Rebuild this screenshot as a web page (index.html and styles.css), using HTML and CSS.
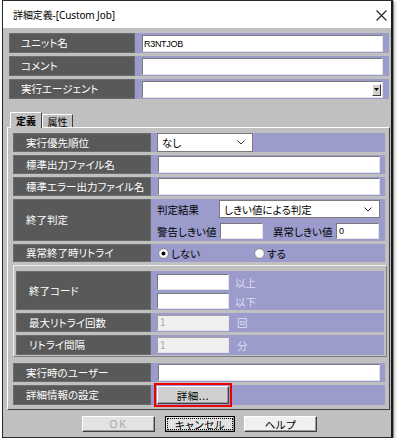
FILE: index.html
```html
<!DOCTYPE html>
<html lang="ja">
<head>
<meta charset="utf-8">
<link rel="stylesheet" href="styles.css">
</head>
<body>
<div class="window">
  <div class="titlebar">
    <span class="title">詳細定義-[Custom Job]</span>
    <svg class="close" width="11" height="11" viewBox="0 0 11 11"><path d="M0.5 0.5 L10.5 10.5 M10.5 0.5 L0.5 10.5" stroke="#222" stroke-width="1.1" fill="none"/></svg>
  </div>
  <div class="body">
    <div class="toprows">
      <div class="trow"><div class="tlabel">ユニット名</div><div class="tval"><div class="tinput mono">R3NTJOB</div></div></div>
      <div class="trow"><div class="tlabel">コメント</div><div class="tval"><div class="tinput"></div></div></div>
      <div class="trow"><div class="tlabel">実行エージェント</div><div class="tval"><div class="tinput combo"><span class="dropbtn"><svg width="5" height="3" viewBox="0 0 5 3"><path d="M0 0 H5 L2.5 3 Z" fill="#000"/></svg></span></div></div></div>
    </div>
    <div class="tabs">
      <div class="tab active">定義</div>
      <div class="tab">属性</div>
    </div>
    <div class="panel">
      <div class="prow"><div class="plabel">実行優先順位</div><div class="pval"><div class="select sel-small">なし<svg class="chev" width="8" height="5" viewBox="0 0 8 5"><path d="M0.5 0.5 L4 4 L7.5 0.5" stroke="#333" fill="none"/></svg></div></div></div>
      <div class="prow"><div class="plabel">標準出力ファイル名</div><div class="pval"><div class="input wide"></div></div></div>
      <div class="prow"><div class="plabel">標準エラー出力ファイル名</div><div class="pval"><div class="input wide"></div></div></div>
      <div class="prow tall"><div class="plabel">終了判定</div>
        <div class="pval col">
          <div class="line"><span class="lbl w62">判定結果</span><div class="select sel-long">しきい値による判定<svg class="chev" width="8" height="5" viewBox="0 0 8 5"><path d="M0.5 0.5 L4 4 L7.5 0.5" stroke="#333" fill="none"/></svg></div></div>
          <div class="line line2"><span class="lbl w63">警告しきい値</span><div class="input small"></div><span class="lbl w63 ml10">異常しきい値</span><div class="input small mono">0</div></div>
        </div>
      </div>
      <div class="prow radio-row"><div class="plabel">異常終了時リトライ</div>
        <div class="pval">
          <span class="opt"><svg width="11" height="11" viewBox="0 0 11 11"><circle cx="5.5" cy="5.5" r="4.8" fill="#fff" stroke="#7a7a7a" stroke-width="0.8"/><circle cx="5.5" cy="5.5" r="2" fill="#000"/></svg>しない</span>
          <span class="opt"><svg width="11" height="11" viewBox="0 0 11 11"><circle cx="5.5" cy="5.5" r="4.8" fill="#fff" stroke="#7a7a7a" stroke-width="0.8"/></svg>する</span>
        </div>
      </div>
      <div class="group">
        <div class="grow code"><div class="glabel">終了コード</div>
          <div class="pval col gcol">
            <div class="gline"><div class="input mid"></div><span class="dis">以上</span></div>
            <div class="gline"><div class="input mid"></div><span class="dis">以下</span></div>
          </div>
        </div>
        <div class="grow"><div class="glabel">最大リトライ回数</div><div class="pval"><div class="input mid disabled">1</div><span class="dis unit">回</span></div></div>
        <div class="grow h20"><div class="glabel">リトライ間隔</div><div class="pval"><div class="input mid disabled">1</div><span class="dis unit">分</span></div></div>
      </div>
      <div class="prow"><div class="plabel">実行時のユーザー</div><div class="pval"><div class="input wide"></div></div></div>
      <div class="prow h20"><div class="plabel">詳細情報の設定</div><div class="pval"><div class="btn detail">詳細...</div></div></div>
    </div>
    <div class="buttons">
      <div class="btn bottom ok">OK</div>
      <div class="btn bottom cancel"><span class="focus">キャンセル</span></div>
      <div class="btn bottom help">ヘルプ</div>
    </div>
  </div>
</div>
</body>
</html>
```

FILE: styles.css
```css
html, body {
  margin: 0;
  padding: 0;
  background: #ffffff;
}
body {
  font-family: "Noto Sans CJK JP", "Noto Sans", sans-serif;
  font-size: 10.5px;
  font-feature-settings: "palt";
  color: #000;
}
.window {
  margin-left: 2px;
  width: 388px;
  height: 436px;
  border: 1px solid #2a2a2a;
  border-right: 2px solid #1a1a1a;
  box-shadow: 1px 1px 0 #8a8a8a, 2px 2px 3px rgba(0,0,0,0.25);
  display: flex;
  flex-direction: column;
  background: #c0c0c0;
}
.titlebar {
  height: 27px;
  flex: none;
  background: #ffffff;
  display: flex;
  align-items: center;
  justify-content: space-between;
  padding: 0 4px 0 10px;
}
.title {
  font-family: "Noto Sans", "Noto Sans CJK JP", sans-serif;
  font-size: 10px;
  letter-spacing: -0.1px;
  line-height: 12px;
  margin-top: 1px;
}
.close { display: block; margin-top: 1px; }

.body {
  flex: 1;
  display: flex;
  flex-direction: column;
  padding: 5px 1px 5px 4px;
  background: #c0c0c0;
}
.toprows {
  display: flex;
  flex-direction: column;
  gap: 3px;
  margin: 0 1px 0 2px;
}
.trow { display: flex; height: 20px; }
.tlabel, .plabel, .glabel {
  box-sizing: border-box;
  background: #595959;
  color: #ffffff;
  border: 1px solid #6c6c6c;
  display: flex;
  align-items: center;
  white-space: nowrap;
  line-height: 12px;
}
.tlabel { width: 126px; padding-left: 11px; }
.tval {
  flex: 1;
  background: #9b9bcc;
  padding: 2px 6px 1px 7px;
  display: flex;
}
.tinput {
  flex: 1;
  position: relative;
  background: #ffffff;
  border-top: 1px solid #7a7a7a;
  border-left: 1px solid #7a7a7a;
  border-right: 1px solid #e4e4e4;
  border-bottom: 1px solid #e4e4e4;
  display: flex;
  align-items: center;
  padding-left: 1px;
}
.mono {
  font-family: "Liberation Sans", sans-serif;
  font-size: 9px;
  letter-spacing: -0.3px;
}
.combo { justify-content: flex-end; padding-right: 1px; }
.dropbtn {
  width: 9px;
  height: 12px;
  box-sizing: border-box;
  background: #d4d0c8;
  border-top: 1px solid #ffffff;
  border-left: 1px solid #ffffff;
  border-right: 1px solid #404040;
  border-bottom: 1px solid #404040;
  display: flex;
  align-items: center;
  justify-content: center;
}
.dropbtn svg { display: block; }

.tabs {
  margin: 13px 0 0 3px;
  height: 15px;
  display: flex;
  align-items: flex-end;
  position: relative;
  z-index: 1;
}
.tab {
  box-sizing: border-box;
  height: 13px;
  width: 31px;
  background: #c0c0c0;
  border-top: 1px solid #ffffff;
  border-left: 1px solid #ffffff;
  border-right: 1px solid #404040;
  display: flex;
  align-items: center;
  justify-content: center;
  font-size: 10px;
  line-height: 11px;
}
.tab.active {
  height: 16px;
  width: 32px;
  margin-bottom: -1px;
  font-weight: bold;
}

.panel {
  height: 283px;
  box-sizing: border-box;
  border-top: 1px solid #ffffff;
  border-left: 1px solid #ffffff;
  border-right: 1px solid #404040;
  border-bottom: 1px solid #404040;
  padding: 5px 4px 0 5px;
  display: flex;
  flex-direction: column;
  gap: 3px;
}
.prow { display: flex; height: 19px; flex: none; }
.prow.tall { height: 42px; }
.prow.radio-row { height: 18px; }
.h20 { height: 20px !important; }
.plabel { width: 138px; padding-left: 12px; }
.pval {
  flex: 1;
  background: #9b9bcc;
  padding-left: 6px;
  display: flex;
  align-items: center;
  white-space: nowrap;
}
.pval.col {
  flex-direction: column;
  align-items: stretch;
  justify-content: flex-start;
}
.input {
  box-sizing: border-box;
  height: 17px;
  background: #ffffff;
  border-top: 1px solid #7a7a7a;
  border-left: 1px solid #7a7a7a;
  border-right: 1px solid #e4e4e4;
  border-bottom: 1px solid #e4e4e4;
  display: flex;
  align-items: center;
  padding-left: 2px;
}
.input.wide { width: 222px; margin-left: 1px; }
.input.small { width: 43px; height: 16px; }
.input.mid { width: 72px; height: 16px; }
.input.disabled {
  background: #f0f0f0;
  color: #a8a8a8;
  font-family: "Liberation Sans", sans-serif;
  font-size: 10px;
  border-top: 1px solid #a0a0a0;
  border-left: 1px solid #a0a0a0;
}
.select {
  box-sizing: border-box;
  background: #ffffff;
  border: 1px solid #7a7a7a;
  display: flex;
  align-items: center;
  justify-content: space-between;
  padding: 0 7px 0 4px;
}
.sel-small { width: 96px; height: 19px; }
.sel-long { width: 161px; height: 18px; }
.chev { display: block; }
.line { display: flex; align-items: center; height: 18px; margin-top: 1px; }
.line2 { margin-top: 5px; height: 16px; }
.lbl { flex: none; }
.w62 { width: 62px; }
.w63 { width: 63px; }
.ml10 { margin-left: 10px; }

.opt {
  display: flex;
  align-items: center;
  gap: 2px;
  width: 95px;
  margin-left: 1px;
}
.opt svg { display: block; }

.group {
  height: 92px;
  flex: none;
  box-sizing: border-box;
  margin-right: -2px;
  margin-bottom: 3px;
  border-top: 1px solid #f0f0f0;
  border-left: 1px solid #f0f0f0;
  border-right: 1px solid #808080;
  border-bottom: 1px solid #808080;
  padding: 5px 2px 0 2px;
  display: flex;
  flex-direction: column;
  gap: 3px;
}
.grow { display: flex; height: 19px; flex: none; }
.grow.code { height: 39px; }
.glabel { width: 135px; padding-left: 12px; }
.gcol { padding-top: 3px; gap: 3px; }
.gline { display: flex; align-items: center; height: 16px; }
.dis {
  color: #dedef2;
  margin-left: 6px;
  font-size: 10.5px;
}
.unit { margin-left: 8px; }

.btn {
  box-sizing: border-box;
  background: #e3e3e3;
  border-top: 1px solid #ffffff;
  border-left: 1px solid #ffffff;
  border-right: 1px solid #404040;
  border-bottom: 1px solid #404040;
  box-shadow: inset -1px -1px 0 #9a9a9a;
  display: flex;
  align-items: center;
  justify-content: center;
  letter-spacing: 0.5px;
}
.detail {
  width: 72px;
  height: 18px;
  background: #d0d0d0;
  outline: 2px solid #ee0000;
  outline-offset: 1px;
}
.buttons {
  display: flex;
  margin-top: 6px;
  padding-left: 75px;
}
.bottom { height: 16px; }
.ok {
  width: 73px;
  color: #a8a8a8;
  font-family: "Noto Sans", sans-serif;
  letter-spacing: 2px;
}
.cancel {
  width: 70px;
  margin-left: 10px;
  border: 1px solid #000;
  padding: 1px;
}
.cancel .focus {
  flex: 1;
  align-self: stretch;
  display: flex;
  align-items: center;
  justify-content: center;
  border: 1px dotted #000;
}
.help { width: 73px; margin-left: 9px; background: #f0f0f0; }
```
